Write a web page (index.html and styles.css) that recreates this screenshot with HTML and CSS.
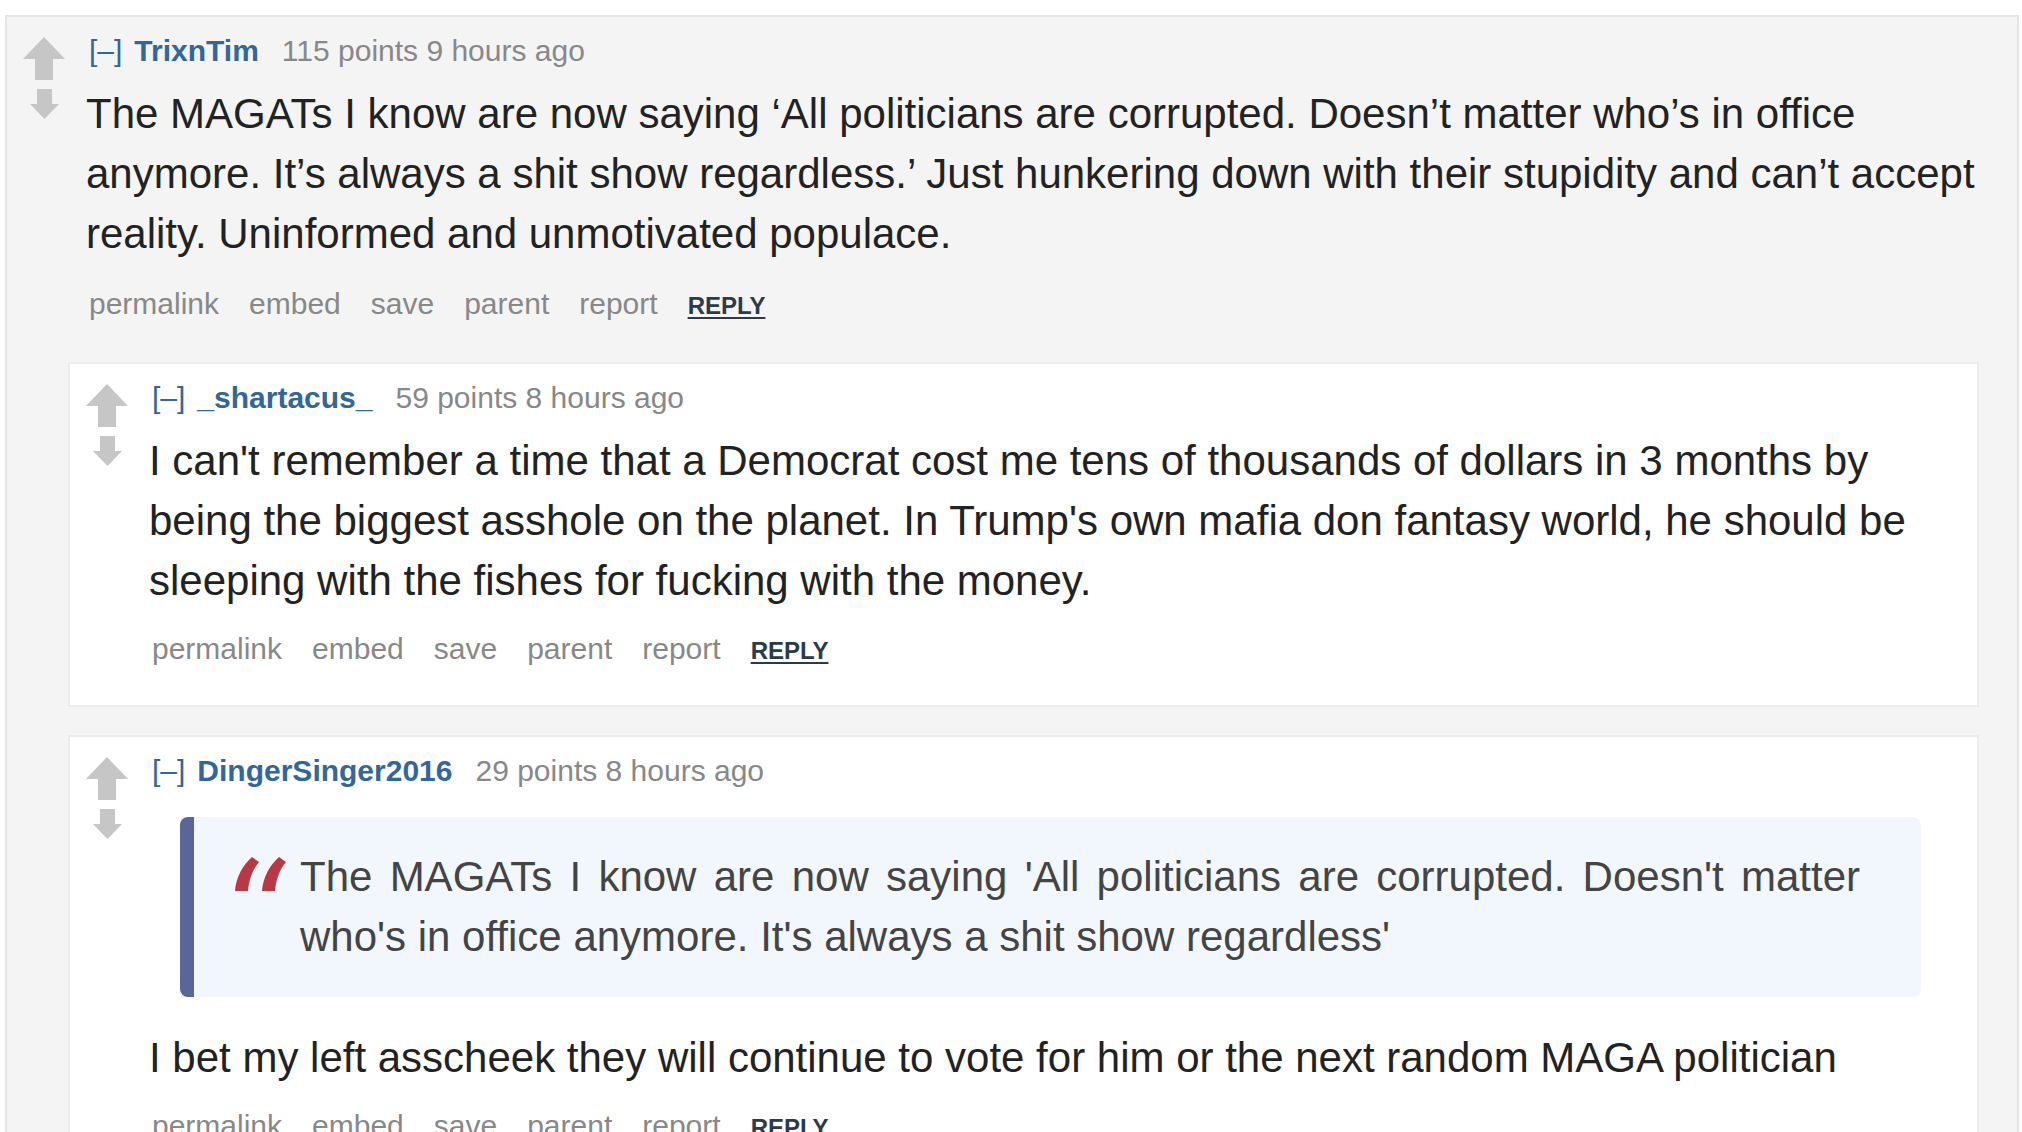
FILE: index.html
```html
<!DOCTYPE html>
<html lang="en">
<head>
  <meta charset="UTF-8">
  <title>comments</title>
  <link rel="stylesheet" href="styles.css">
</head>
<body>
<div class="thread">

  <div class="comment top">
    <div class="midcol">
      <svg class="up" width="42" height="43" viewBox="0 0 42 43"><path d="M21 0 L42 22 L30 22 L30 43 L12 43 L12 22 L0 22 Z"/></svg>
      <svg class="down" width="29" height="30" viewBox="0 0 29 30"><path d="M7 0 L22 0 L22 15 L29 15 L14.5 30 L0 15 L7 15 Z"/></svg>
    </div>
    <div class="entry">
      <p class="tagline"><a class="expand">[–]</a><a class="author">TrixnTim</a><span>115 points 9 hours ago</span></p>
      <div class="md">
        <p>The MAGATs I know are now saying ‘All politicians are corrupted. Doesn’t matter who’s in office anymore. It’s always a shit show regardless.’ Just hunkering down with their stupidity and can’t accept reality. Uninformed and unmotivated populace.</p>
      </div>
      <ul class="buttons">
        <li>permalink</li>
        <li>embed</li>
        <li>save</li>
        <li>parent</li>
        <li>report</li>
        <li class="reply">reply</li>
      </ul>
    </div>

    <div class="child">
      <div class="comment">
        <div class="midcol">
          <svg class="up" width="42" height="43" viewBox="0 0 42 43"><path d="M21 0 L42 22 L30 22 L30 43 L12 43 L12 22 L0 22 Z"/></svg>
          <svg class="down" width="29" height="30" viewBox="0 0 29 30"><path d="M7 0 L22 0 L22 15 L29 15 L14.5 30 L0 15 L7 15 Z"/></svg>
        </div>
        <div class="entry">
          <p class="tagline"><a class="expand">[–]</a><a class="author">_shartacus_</a><span>59 points 8 hours ago</span></p>
          <div class="md">
            <p>I can't remember a time that a Democrat cost me tens of thousands of dollars in 3 months by being the biggest asshole on the planet. In Trump's own mafia don fantasy world, he should be sleeping with the fishes for fucking with the money.</p>
          </div>
          <ul class="buttons">
            <li>permalink</li>
            <li>embed</li>
            <li>save</li>
            <li>parent</li>
            <li>report</li>
            <li class="reply">reply</li>
          </ul>
        </div>
      </div>

      <div class="comment">
        <div class="midcol">
          <svg class="up" width="42" height="43" viewBox="0 0 42 43"><path d="M21 0 L42 22 L30 22 L30 43 L12 43 L12 22 L0 22 Z"/></svg>
          <svg class="down" width="29" height="30" viewBox="0 0 29 30"><path d="M7 0 L22 0 L22 15 L29 15 L14.5 30 L0 15 L7 15 Z"/></svg>
        </div>
        <div class="entry">
          <p class="tagline"><a class="expand">[–]</a><a class="author">DingerSinger2016</a><span>29 points 8 hours ago</span></p>
          <div class="md">
            <blockquote>
              <svg class="qmark" width="54" height="34" viewBox="0 0 54 34">
                <path d="M20 0 L27 5 C21 12 17 22 16 34 L3 34 C4 20 11 8 20 0 Z"/>
                <path d="M47 0 L54 5 C48 12 44 22 43 34 L30 34 C31 20 38 8 47 0 Z"/>
              </svg>
              <p>The MAGATs I know are now saying 'All politicians are corrupted. Doesn't matter who's in office anymore. It's always a shit show regardless'</p>
            </blockquote>
            <p>I bet my left asscheek they will continue to vote for him or the next random MAGA politician</p>
          </div>
          <ul class="buttons">
            <li>permalink</li>
            <li>embed</li>
            <li>save</li>
            <li>parent</li>
            <li>report</li>
            <li class="reply">reply</li>
          </ul>
        </div>
      </div>
    </div>
  </div>

</div>
</body>
</html>
```

FILE: styles.css
```css
body {
  margin: 0;
  background: #fff;
  font-family: "Liberation Sans", Arial, sans-serif;
  color: #222;
}
.thread {
  padding: 15px 3px 0 5px;
}
.comment {
  display: grid;
  grid-template-columns: 42px 1fr;
  column-gap: 24px;
  background: #fff;
  border: 2px solid #ececec;
  padding: 16px 38px 36px 16px;
}
.comment.top {
  background: #f4f4f4;
  border-color: #e6e6e6;
}
.midcol {
  padding-top: 4px;
}
.midcol svg {
  display: block;
  fill: #c6c6c6;
}
.midcol .down {
  margin: 9px auto 0;
}
.tagline {
  display: flex;
  align-items: baseline;
  margin: 0;
  font-size: 30px;
  line-height: 36px;
  color: #888;
}
.expand {
  color: #369;
  margin-right: 12px;
}
.author {
  color: #369;
  font-weight: bold;
  margin-right: 23px;
}
.md {
  margin: 15px 0 0 -3px;
  font-size: 42px;
  line-height: 60px;
}
.md p {
  margin: 0;
}
blockquote {
  display: flex;
  align-items: flex-start;
  margin: 28px 18px 31px 31px;
  padding: 30px 61px 30px 38px;
  background: #f2f7fe;
  border-left: 14px solid #586797;
  border-radius: 8px;
  color: #444;
}
blockquote p {
  text-align: justify;
}
.qmark {
  flex: none;
  margin: 10px 14px 0 0;
  fill: #b83844;
}
.buttons {
  display: flex;
  align-items: baseline;
  gap: 30px;
  list-style: none;
  margin: 20px 0 0;
  padding: 0;
  font-size: 30px;
  line-height: 36px;
  color: #888;
}
.top > .entry .buttons {
  margin-top: 22px;
}
.buttons .reply {
  font-size: 24px;
  font-weight: bold;
  text-transform: uppercase;
  text-decoration: underline;
  text-decoration-thickness: 2px;
  text-underline-offset: 3px;
  color: #2b3b4b;
}
.child {
  grid-column: 1 / -1;
  margin: 38px 0 0 45px;
}
.child .comment + .comment {
  margin-top: 28px;
}
```
